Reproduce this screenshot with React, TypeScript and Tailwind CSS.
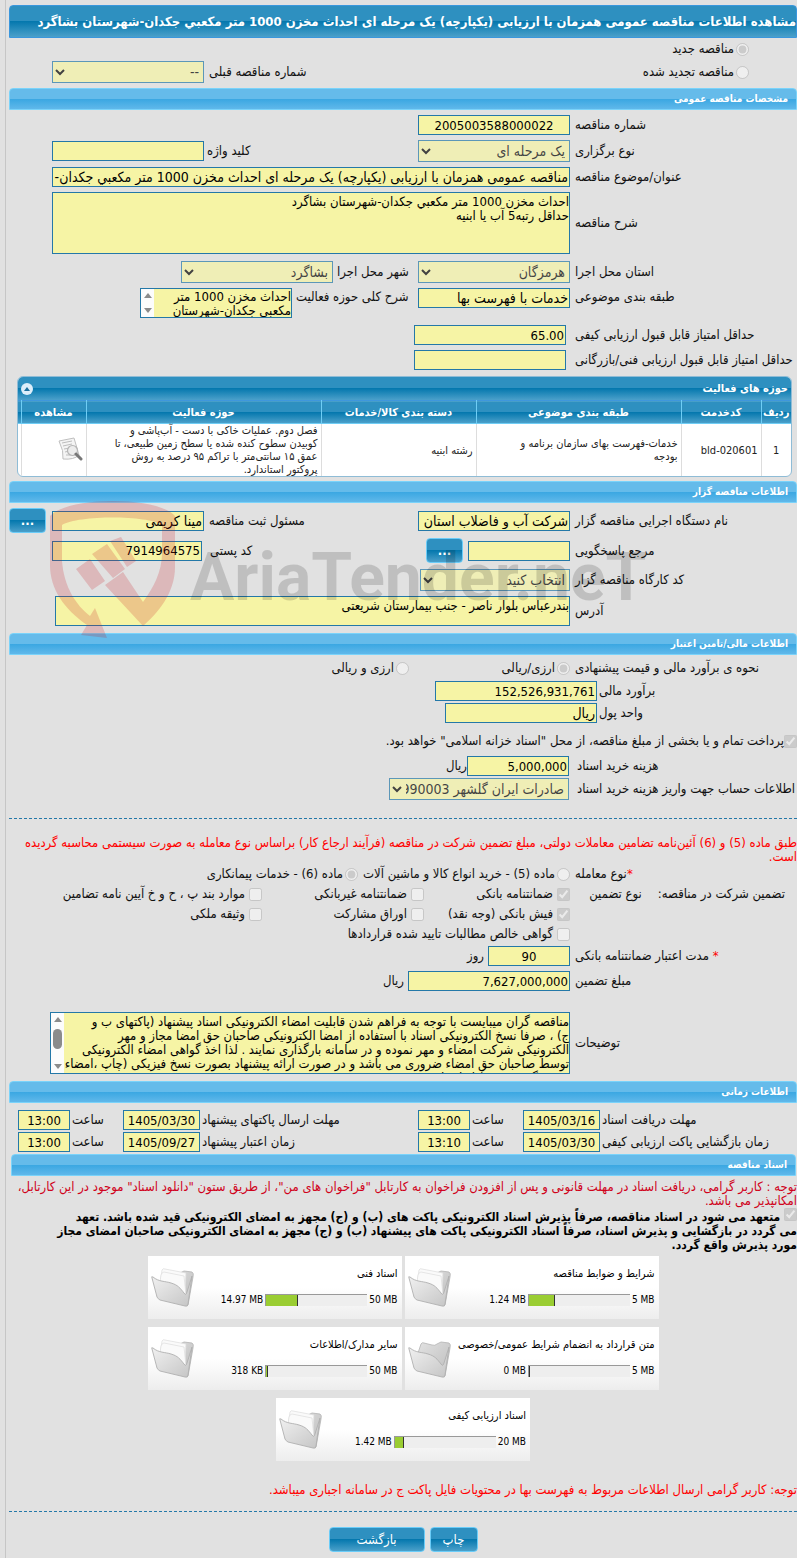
import {clsx} from "clsx"
import type {ComponentProps, ReactNode} from "react"

const BLUE =
  "bg-[linear-gradient(to_bottom,#2e90c0_0%,#2e90c0_50%,#0578ae_50%,#4ba0ca_100%)] text-white"
const BOX = "border border-[#2478a8] bg-[#f6f4a5] text-black"

interface DocumentItem {
  title: string
  used: string
  limit: string
  percent: number
}

const documents: DocumentItem[] = [
  {title: "شرایط و ضوابط مناقصه", used: "1.24 MB", limit: "5 MB", percent: 25},
  {title: "اسناد فنی", used: "14.97 MB", limit: "50 MB", percent: 30},
  {title: "متن قرارداد به انضمام شرایط عمومی/خصوصی", used: "0 MB", limit: "5 MB", percent: 0},
  {title: "سایر مدارک/اطلاعات", used: "318 KB", limit: "50 MB", percent: 1},
  {title: "اسناد ارزیابی کیفی", used: "1.42 MB", limit: "20 MB", percent: 8},
]

function SectionBar({children, className}: {children: ReactNode; className?: string}) {
  return (
    <h2
      className={clsx(
        "flex h-[22px] items-center rounded-t border border-[#7ad3fa] bg-[linear-gradient(to_bottom,#65bbea_0%,#65bbea_50%,#3aa7e2_50%,#60b8ea_100%)] pr-2 text-[10px] font-bold text-white",
        className
      )}
    >
      {children}
    </h2>
  )
}

function Row({children, className}: {children: ReactNode; className?: string}) {
  return <div className={clsx("flex items-center", className)}>{children}</div>
}

function Label({className, ...props}: ComponentProps<"label">) {
  return (
    <label
      className={clsx("shrink-0 whitespace-nowrap text-left", className ?? "w-[227px] pl-[5px]")}
      {...props}
    />
  )
}

function TextInput({className, ...props}: ComponentProps<"input">) {
  return (
    <input
      type="text"
      readOnly
      className={clsx("h-5 shrink-0 px-px leading-4", BOX, className ?? "w-[152px] text-sm")}
      {...props}
    />
  )
}

function SelectBox({id, value, className}: {id: string; value: string; className?: string}) {
  return (
    <select
      id={id}
      disabled
      className={clsx("h-[22px] shrink-0 text-sm opacity-70", BOX, className ?? "w-[152px]")}
    >
      <option>{value}</option>
    </select>
  )
}

function TextBox({className, ...props}: ComponentProps<"textarea">) {
  return (
    <textarea
      readOnly
      className={clsx(
        "block resize-none overflow-hidden whitespace-pre leading-[14px]",
        className
      )}
      {...props}
    />
  )
}

function ScrollStrip({thumb}: {thumb?: boolean}) {
  return (
    <div className="flex w-[13px] shrink-0 flex-col items-center justify-between bg-[#fcfcfc] py-1">
      <svg width="8" height="5" viewBox="0 0 8 5">
        <path d="M4 0L8 5H0z" fill="#8b8b8b" />
      </svg>
      {thumb && <div className="mb-2 h-5 w-[9px] rounded-full bg-[#8b8b8b]" />}
      <svg width="8" height="5" viewBox="0 0 8 5">
        <path d="M0 0H8L4 5z" fill="#8b8b8b" />
      </svg>
    </div>
  )
}

function Tick({
  type,
  name,
  checked,
  gap = "gap-1",
  children,
}: {
  type: "radio" | "checkbox"
  name?: string
  checked?: boolean
  gap?: string
  children: ReactNode
}) {
  return (
    <label className={clsx("flex items-center whitespace-nowrap", gap)}>
      <input
        type={type}
        name={name}
        defaultChecked={checked}
        disabled
        className="size-[13px] shrink-0"
      />
      <span>{children}</span>
    </label>
  )
}

function BlueButton({className, children, ...props}: ComponentProps<"button">) {
  return (
    <button
      type="button"
      className={clsx(
        "flex h-[25px] shrink-0 items-center justify-center rounded border border-[#6accf8]",
        BLUE,
        className
      )}
      {...props}
    >
      {children}
    </button>
  )
}

function FolderIcon({empty}: {empty?: boolean}) {
  return (
    <svg width="44" height="40" viewBox="0 0 44 40" className="shrink-0">
      <defs>
        <linearGradient id="folderFront" x1="0" y1="0" x2="1" y2="1">
          <stop offset="0" stopColor="#f1f1f1" />
          <stop offset="1" stopColor="#c4c4c4" />
        </linearGradient>
        <linearGradient id="folderBack" x1="0" y1="0" x2="1" y2="1">
          <stop offset="0" stopColor="#e2e2e2" />
          <stop offset="1" stopColor="#bdbdbd" />
        </linearGradient>
      </defs>
      <path
        d="M10 14L13 5Q14 3 16 4L24 6Q27 7 29 5L33 3L41 4Q43 5 42 9L37 37L10 29z"
        fill="url(#folderBack)"
        stroke="#b4b4b4"
        strokeWidth="0.8"
      />
      {!empty && (
        <g fill="#fafafa" stroke="#dcdcdc" strokeWidth="0.7">
          <path d="M11 2Q12 0 14 1L35 5L34 24L9 17z" />
          <path d="M10 7Q11 4 13 4L33 8L35 27L8 20z" />
        </g>
      )}
      <path
        d="M1 10Q0 8 2 9C8 14 14 13 20 15C27 17 29 20 33 25Q35 28 36 24L41 8L37 36Q37 39 34 38L9 32Q7 31 6 29z"
        fill="url(#folderFront)"
        stroke="#b0b0b0"
        strokeWidth="0.9"
      />
    </svg>
  )
}

function PreviewIcon() {
  return (
    <svg width="26" height="26" viewBox="0 0 26 26">
      <path d="M2 4L17 1L22 18Q17 23 6 22Q7 14 2 4z" fill="#f4f4f4" stroke="#c0c0c0" />
      <path d="M5 6L15 4M6 9L15 7M7 12L13 11M8 15L12 14M9 18L13 18" stroke="#bdbdbd" />
      <circle cx="15.500" cy="13.500" r="5" fill="#ececec" stroke="#b5b5b5" strokeWidth="1.200" />
      <path d="M19 17L24 22" stroke="#777" strokeWidth="3" strokeLinecap="round" />
    </svg>
  )
}

function Watermark() {
  return (
    <div
      dir="ltr"
      aria-hidden
      className="pointer-events-none absolute top-5 left-[41px] z-10 flex items-start"
    >
      <svg width="126" height="138" viewBox="0 0 126 138" fill="#c81420" fillOpacity="0.2">
        <path d="M0 15C18 -5 108 -5 125 15V66C125 92 108 112 93 125L55 84L73 71L93 101C104 86 112 70 112 52V24C98 14 28 14 12 24V60C14 86 26 104 40 115L45 107L57 137L31 134L37 124C14 108 0 88 0 64z" />
        <path d="M26 68L40 58L55 80L42 89zM42 53L57 43L75 68L63 77zM60 40L71 36L86 60L77 66z" />
      </svg>
      <span className="mt-8 ml-[14px] font-[Roboto,sans-serif] text-[66px] leading-[90px] font-bold text-black/15">
        AriaTender.neT
      </span>
    </div>
  )
}

function ActivityTable() {
  const head = "h-[23px] border-[#6fcdf5] font-bold"
  const cell = "border-[#ddd] px-[3px]"
  return (
    <section className="mt-[6px] mr-[5px] ml-2 overflow-hidden rounded-md border border-[#8fbcd6] bg-white">
      <div className={clsx("flex h-[23px] items-center justify-between px-[3px]", BLUE)}>
        <h3 className="text-[11px] font-bold">حوزه های فعالیت</h3>
        <button
          type="button"
          aria-label="بستن"
          className="flex size-3 items-center justify-center rounded-full bg-[#dceefa]"
        >
          <svg width="6" height="4" viewBox="0 0 6 4">
            <path d="M3 0L6 4H0z" fill="#1b6f9e" />
          </svg>
        </button>
      </div>
      <table className="w-full table-fixed border-collapse text-[11px] leading-[13px]">
        <thead className={clsx("border-y border-t-[#3f97dd] border-b-[#6fcdf5]", BLUE)}>
          <tr>
            <th className={clsx(head, "w-[30px]")}>ردیف</th>
            <th className={clsx(head, "w-20 border-r")}>کدخدمت</th>
            <th className={clsx(head, "w-[205px] border-r")}>طبقه بندی موضوعی</th>
            <th className={clsx(head, "w-[155px] border-r")}>دسته بندی کالا/خدمات</th>
            <th className={clsx(head, "border-r")}>حوزه فعالیت</th>
            <th className={clsx(head, "w-[65px] border-x")}>مشاهده</th>
            <th className="w-[3px]" aria-label="-" />
          </tr>
        </thead>
        <tbody className="text-[#222]">
          <tr>
            <td className={clsx(cell, "text-center")}>1</td>
            <td className={clsx(cell, "border-r")} dir="ltr">
              <div className="text-right">bld-020601</div>
            </td>
            <td className={clsx(cell, "border-r")}>
              خدمات-فهرست بهای سازمان برنامه و
              <br />
              بودجه
            </td>
            <td className={clsx(cell, "border-r")}>رشته ابنیه</td>
            <td className={clsx(cell, "border-r whitespace-nowrap")}>
              فصل دوم. عملیات خاکی با دست - آب‌پاشی و
              <br />
              کوبیدن سطوح کنده شده یا سطح زمین طبیعی، تا
              <br />
              عمق ۱۵ سانتی‌متر با تراکم ۹۵ درصد به روش
              <br />
              پروکتور استاندارد.
            </td>
            <td className={clsx(cell, "border-x")}>
              <button type="button" aria-label="مشاهده" className="block">
                <PreviewIcon />
              </button>
            </td>
            <td />
          </tr>
        </tbody>
      </table>
    </section>
  )
}

function DocumentCard({item}: {item: DocumentItem}) {
  return (
    <article className="flex h-[63px] w-[254px] bg-linear-to-b from-white from-50% to-[#ededed] text-[10px] leading-[14px] text-black">
      <div className="flex flex-1 flex-col justify-between pt-[11px] pr-1 pb-3">
        <h3 className="text-[11px] whitespace-nowrap">{item.title}</h3>
        <div className="flex items-center gap-0.5 whitespace-nowrap">
          <span dir="ltr">{item.limit}</span>
          <div className="flex h-3 w-[102px] justify-end border-t border-l border-[#999] bg-[#eee]">
            <div
              className="border-r border-[#333] bg-[#9acd32]"
              style={{width: `calc(${item.percent}% + 1px)`}}
            />
          </div>
          <span dir="ltr">{item.used}</span>
        </div>
      </div>
      <div className="pt-3 pl-[3px]">
        <FolderIcon empty={item.percent === 0} />
      </div>
    </article>
  )
}

function TimeField({
  id,
  label,
  date,
  time,
  labelClass,
}: {
  id: string
  label: string
  date: string
  time: string
  labelClass: string
}) {
  return (
    <>
      <Label htmlFor={id} className={clsx("pl-0.5", labelClass)}>
        {label}
      </Label>
      <TextInput id={id} defaultValue={date} className="w-[77px] text-center" />
      <Label htmlFor={`${id}-hour`} className="w-[53px] pl-0.5">
        ساعت
      </Label>
      <TextInput id={`${id}-hour`} defaultValue={time} className="w-[52px] text-center" />
    </>
  )
}

export default function App() {
  return (
    <div
      dir="rtl"
      lang="fa"
      className="min-h-screen overflow-hidden bg-[#e1e1e1] pl-[5px] font-['DejaVu_Sans_Condensed','DejaVu_Sans',sans-serif] text-[13px] leading-[14px] text-[#111]"
    >
      <main className="border-l border-[#c6c6c6] pt-[5px] pb-[6px] pl-[3px]">
        <h1
          className={clsx(
            "flex h-[33px] items-center rounded-t border border-[#3a97dd] font-bold whitespace-nowrap",
            BLUE
          )}
        >
          مشاهده اطلاعات مناقصه عمومی همزمان با ارزیابی (یکپارچه) یک مرحله ای احداث مخزن 1000 متر
          مکعبي جکدان-شهرستان بشاگرد
        </h1>

        <Row className="h-[22px] pr-12">
          <Tick type="radio" name="kind" checked gap="gap-0.5">
            مناقصه جدید
          </Tick>
        </Row>
        <Row className="mt-px pr-12">
          <div className="w-[440px] shrink-0">
            <Tick type="radio" name="kind" gap="gap-0.5">
              مناقصه تجدید شده
            </Tick>
          </div>
          <Label htmlFor="previous" className="w-[105px] pl-[5px]">
            شماره مناقصه قبلی
          </Label>
          <SelectBox id="previous" value="--" />
        </Row>

        <SectionBar className="mt-[5px]">مشخصات مناقصه عمومی</SectionBar>
        <Row className="mt-[5px]">
          <Label htmlFor="number">شماره مناقصه</Label>
          <TextInput id="number" defaultValue="2005003588000022" className="w-[152px] text-center" />
        </Row>
        <Row className="mt-[5px]">
          <Label htmlFor="stage">نوع برگزاری</Label>
          <SelectBox id="stage" value="یک مرحله ای" />
          <Label htmlFor="keyword" className="w-[214px] pl-[3px]">
            کلید واژه
          </Label>
          <TextInput id="keyword" />
        </Row>
        <Row className="mt-[5px] pl-[43px]">
          <Label htmlFor="subject">عنوان/موضوع مناقصه</Label>
          <TextInput
            id="subject"
            className="min-w-0 flex-1 text-sm"
            defaultValue="مناقصه عمومی همزمان با ارزیابی (یکپارچه) یک مرحله ای احداث مخزن 1000 متر مکعبي جکدان-شهرستان بشاگرد"
          />
        </Row>
        <Row className="mt-[5px] pl-[43px]">
          <Label htmlFor="description">شرح مناقصه</Label>
          <TextBox
            id="description"
            className={clsx("h-[62px] min-w-0 flex-1 pt-0.5", BOX)}
            defaultValue={"احداث مخزن 1000 متر مکعبي جکدان-شهرستان بشاگرد\nحداقل رتبه5 آب یا ابنیه"}
          />
        </Row>
        <Row className="mt-[7px]">
          <Label htmlFor="province">استان محل اجرا</Label>
          <SelectBox id="province" value="هرمزگان" />
          <Label htmlFor="city" className="w-[85px] pl-1">
            شهر محل اجرا
          </Label>
          <SelectBox id="city" value="بشاگرد" />
        </Row>
        <div className="mt-[5px] flex items-start">
          <Label htmlFor="category" className="mt-0.5 w-[227px] pl-[5px]">
            طبقه بندی موضوعی
          </Label>
          <TextInput id="category" defaultValue="خدمات با فهرست بها" />
          <Label htmlFor="scope" className="mt-0.5 w-[126px] pl-1">
            شرح کلی حوزه فعالیت
          </Label>
          <div className={clsx("flex h-[30px] w-[152px]", BOX)}>
            <TextBox
              id="scope"
              className="min-w-0 flex-1 pt-px"
              defaultValue={"احداث مخزن 1000 متر\nمکعبي جکدان-شهرستان\nبشاگرد"}
            />
            <ScrollStrip />
          </div>
        </div>
        <Row className="mt-[7px]">
          <Label htmlFor="quality" className="w-[231px] pl-[9px]">
            حداقل امتیاز قابل قبول ارزیابی کیفی
          </Label>
          <TextInput id="quality" defaultValue="65.00" className="w-[152px]" />
        </Row>
        <Row className="mt-[5px]">
          <Label htmlFor="technical" className="w-[231px] pl-[9px]">
            حداقل امتیاز قابل قبول ارزیابی فنی/بازرگانی
          </Label>
          <TextInput id="technical" />
        </Row>

        <ActivityTable />

        <section className="relative">
          <SectionBar className="mt-1">اطلاعات مناقصه گزار</SectionBar>
          <Row className="mt-[5px]">
            <Label htmlFor="agency">نام دستگاه اجرایی مناقصه گزار</Label>
            <TextInput id="agency" defaultValue="شرکت آب و فاضلاب استان" />
            <Label htmlFor="officer" className="w-[214px] pl-[5px]">
              مسئول ثبت مناقصه
            </Label>
            <TextInput id="officer" defaultValue="مینا کریمی" />
            <BlueButton className="mr-[6px] w-[37px] font-bold">...</BlueButton>
          </Row>
          <Row className="mt-[5px]">
            <Label htmlFor="contact">مرجع پاسخگویی</Label>
            <TextInput id="contact" className="w-[102px]" />
            <BlueButton className="mr-[5px] w-[37px] font-bold">...</BlueButton>
            <Label htmlFor="postcode" className="w-[224px] pl-2">
              کد پستی
            </Label>
            <TextInput id="postcode" defaultValue="7914964575" className="w-[150px]" />
          </Row>
          <Row className="mt-[6px]">
            <Label htmlFor="workshop">کد کارگاه مناقصه گزار</Label>
            <SelectBox id="workshop" value="انتخاب کنید" className="w-[150px]" />
          </Row>
          <Row className="mt-[5px] pl-[46px]">
            <Label htmlFor="address">آدرس</Label>
            <TextBox
              id="address"
              className={clsx("h-[30px] min-w-0 flex-1 pt-0.5", BOX)}
              defaultValue="بندرعباس بلوار ناصر - جنب بیمارستان شریعتی"
            />
          </Row>
          <Watermark />
        </section>

        <SectionBar className="mt-[7px]">اطلاعات مالی/تامین اعتبار</SectionBar>
        <Row className="mt-0.5 h-[22px]">
          <span className="w-[227px] shrink-0 pl-[5px] text-left">
            نحوه ی برآورد مالی و قیمت پیشنهادی
          </span>
          <div className="w-[161px]">
            <Tick type="radio" name="currency" checked gap="gap-0.5">
              ارزی/ریالی
            </Tick>
          </div>
          <Tick type="radio" name="currency" gap="gap-0.5">
            ارزی و ریالی
          </Tick>
        </Row>
        <Row className="mt-0.5">
          <Label htmlFor="estimate" className="w-[200px] pl-0.5">
            برآورد مالی
          </Label>
          <TextInput id="estimate" defaultValue="152,526,931,761" className="w-[162px]" />
        </Row>
        <Row className="mt-0.5">
          <Label htmlFor="unit" className="w-[200px] pl-0.5">
            واحد پول
          </Label>
          <TextInput id="unit" defaultValue="ریال" />
        </Row>
        <Row className="mt-[7px] h-[22px]">
          <Tick type="checkbox" checked gap="gap-0">
            پرداخت تمام و یا بخشی از مبلغ مناقصه، از محل "اسناد خزانه اسلامی" خواهد بود.
          </Tick>
        </Row>
        <Row className="mt-1">
          <Label htmlFor="fee" className="w-[228px] pl-2">
            هزینه خرید اسناد
          </Label>
          <TextInput id="fee" defaultValue="5,000,000" className="w-[102px]" />
          <span>ریال</span>
        </Row>
        <Row className="mt-0.5">
          <Label htmlFor="account" className="w-[228px] pl-2">
            اطلاعات حساب جهت واریز هزینه خرید اسناد
          </Label>
          <SelectBox id="account" value="صادرات ایران گلشهر 34990003" className="w-[180px]" />
        </Row>

        <hr className="mt-[18px] border-dashed border-[#2478a8]" />
        <p className="mt-[17px] whitespace-nowrap text-[#f00]">
          طبق ماده (5) و (6) آئین‌نامه تضامین معاملات دولتی، مبلغ تضمین شرکت در مناقصه (فرآیند ارجاع
          کار) براساس نوع معامله به صورت سیستمی محاسبه گردیده
          <br />
          است.
        </p>
        <Row className="h-5">
          <span className="w-[227px] shrink-0 pl-[5px] text-left">
            <span className="text-[#f00]">*</span>نوع معامله
          </span>
          <div className="w-[212px]">
            <Tick type="radio" name="deal" gap="gap-0.5">
              ماده (5) - خرید انواع کالا و ماشین آلات
            </Tick>
          </div>
          <Tick type="radio" name="deal" checked gap="gap-0.5">
            ماده (6) - خدمات پیمانکاری
          </Tick>
        </Row>
        <div className="grid auto-rows-[20px] grid-cols-[227px_146px_162px_1fr] items-center">
          <div className="flex gap-4 pr-3">
            <span>تضمین شرکت در مناقصه:</span>
            <span>نوع تضمین</span>
          </div>
          <Tick type="checkbox" checked>
            ضمانتنامه بانکی
          </Tick>
          <Tick type="checkbox">ضمانتنامه غیربانکی</Tick>
          <Tick type="checkbox">موارد بند پ ، ح و خ آیین نامه تضامین</Tick>
          <div className="col-start-2">
            <Tick type="checkbox" checked>
              فیش بانکی (وجه نقد)
            </Tick>
          </div>
          <Tick type="checkbox">اوراق مشارکت</Tick>
          <Tick type="checkbox">وثیقه ملکی</Tick>
          <div className="col-start-2">
            <Tick type="checkbox">گواهی خالص مطالبات تایید شده قراردادها</Tick>
          </div>
        </div>
        <Row className="mt-0.5">
          <Label htmlFor="validity">
            <span className="text-[#f00]">*</span> مدت اعتبار ضمانتنامه بانکی
          </Label>
          <TextInput id="validity" defaultValue="90" className="w-[82px] text-center" />
          <span className="mr-1">روز</span>
        </Row>
        <Row className="mt-[5px]">
          <Label htmlFor="guarantee">مبلغ تضمین</Label>
          <TextInput id="guarantee" defaultValue="7,627,000,000" className="w-[162px]" />
          <span className="mr-1">ریال</span>
        </Row>
        <Row className="mt-[21px] pl-[41px]">
          <Label htmlFor="notes">توضیحات</Label>
          <div className={clsx("flex h-[62px] min-w-0 flex-1", BOX)}>
            <TextBox
              id="notes"
              className="min-w-0 flex-1 pt-0.5"
              defaultValue={
                "مناقصه گران میبایست با توجه به فراهم شدن قابلیت امضاء الکترونیکی اسناد پیشنهاد (پاکتهای ب و\nج) ، صرفا نسخ الکترونیکی اسناد با استفاده از امضا الکترونیکی صاحبان حق امضا مجاز و مهر\nالکترونیکی شرکت امضاء و مهر نموده و در سامانه بارگذاری نمایند . لذا اخذ گواهی امضاء الکترونیکی\nتوسط صاحبان حق امضاء ضروری می باشد و در صورت ارائه پیشنهاد بصورت نسخ فیزیکی (چاپ ،امضاء\nو مهر گرم و غیره) از ارزیابی"
              }
            />
            <ScrollStrip thumb />
          </div>
        </Row>

        <SectionBar className="mt-[7px]">اطلاعات زمانی</SectionBar>
        <Row className="mt-[7px]">
          <TimeField
            id="receive"
            label="مهلت دریافت اسناد"
            date="1405/03/16"
            time="13:00"
            labelClass="w-[197px]"
          />
          <TimeField
            id="send"
            label="مهلت ارسال پاکتهای پیشنهاد"
            date="1405/03/30"
            time="13:00"
            labelClass="w-[218px]"
          />
        </Row>
        <Row className="mt-0.5">
          <TimeField
            id="opening"
            label="زمان بازگشایی پاکت ارزیابی کیفی"
            date="1405/03/30"
            time="13:10"
            labelClass="w-[197px]"
          />
          <TimeField
            id="credit"
            label="زمان اعتبار پیشنهاد"
            date="1405/09/27"
            time="13:00"
            labelClass="w-[218px]"
          />
        </Row>

        <SectionBar className="mt-0.5 mr-px ml-0.5">اسناد مناقصه</SectionBar>
        <p className="mt-1 whitespace-nowrap text-[#d0021b]">
          توجه : کاربر گرامی، دریافت اسناد در مهلت قانونی و پس از افزودن فراخوان به کارتابل "فراخوان
          های من"، از طریق ستون "دانلود اسناد" موجود در این کارتابل،
          <br />
          امکانپذیر می باشد.
        </p>
        <label className="block text-xs leading-[14px] font-bold whitespace-nowrap text-black">
          <input type="checkbox" defaultChecked disabled className="size-[13px]" /> متعهد می شود در
          اسناد مناقصه، صرفاً پذیرش اسناد الکترونیکی پاکت های (ب) و (ج) مجهز به امضای الکترونیکی قید
          شده باشد. تعهد
          <br />
          می گردد در بازگشایی و پذیرش اسناد، صرفاً اسناد الکترونیکی پاکت های پیشنهاد (ب) و (ج) مجهز به
          امضای الکترونیکی صاحبان امضای مجاز
          <br />
          مورد پذیرش واقع گردد.
        </label>

        <div className="mx-auto mt-1 flex max-w-[560px] flex-wrap justify-center gap-x-[3px] gap-y-2">
          {documents.map(item => (
            <DocumentCard key={item.title} item={item} />
          ))}
        </div>

        <p className="mt-[22px] whitespace-nowrap text-[#f00]">
          توجه: کاربر گرامی ارسال اطلاعات مربوط به فهرست بها در محتویات فایل پاکت ج در سامانه اجباری
          میباشد.
        </p>
        <hr className="mt-[14px] border-dashed border-[#2478a8]" />
        <div className="mt-[15px] flex justify-center gap-[5px]">
          <BlueButton className="w-12">چاپ</BlueButton>
          <BlueButton className="w-24">بازگشت</BlueButton>
        </div>
      </main>
    </div>
  )
}
